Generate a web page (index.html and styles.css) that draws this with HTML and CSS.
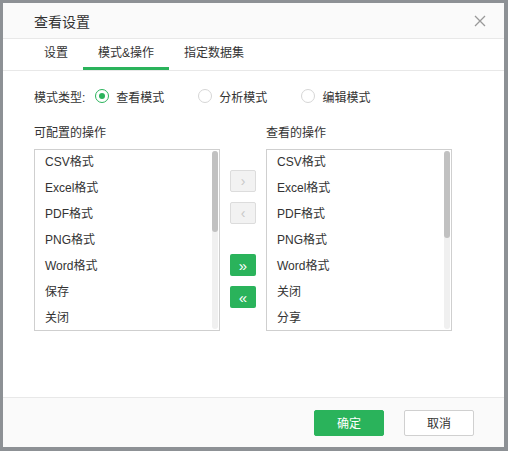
FILE: index.html
```html
<!DOCTYPE html>
<html>
<head>
<meta charset="utf-8">
<link rel="stylesheet" href="styles.css">
</head>
<body>
<div class="dialog">
  <div class="header">
    <div class="title">查看设置</div>
    <svg class="close" width="12" height="12" viewBox="0 0 12 12"><path d="M1 1L11 11M11 1L1 11" stroke="#999" stroke-width="1.3" fill="none"/></svg>
  </div>
  <div class="tabs">
    <div class="tab">设置</div>
    <div class="tab active">模式&amp;操作</div>
    <div class="tab">指定数据集</div>
  </div>
  <div class="content">
    <div class="mode-row">
      <span class="mode-label">模式类型:</span>
      <label class="radio checked"><span class="circle"></span><span>查看模式</span></label>
      <label class="radio"><span class="circle"></span><span>分析模式</span></label>
      <label class="radio"><span class="circle"></span><span>编辑模式</span></label>
    </div>
    <div class="transfer">
      <div class="col">
        <div class="col-title">可配置的操作</div>
        <div class="listbox">
          <div class="items">
            <div class="item">CSV格式</div>
            <div class="item">Excel格式</div>
            <div class="item">PDF格式</div>
            <div class="item">PNG格式</div>
            <div class="item">Word格式</div>
            <div class="item">保存</div>
            <div class="item">关闭</div>
          </div>
          <div class="scrollbar"><div class="thumb thumb-left"></div></div>
        </div>
      </div>
      <div class="mid">
        <div class="mbtn disabled">&#8250;</div>
        <div class="mbtn disabled">&#8249;</div>
        <div class="mbtn green spaced">&#187;</div>
        <div class="mbtn green">&#171;</div>
      </div>
      <div class="col">
        <div class="col-title">查看的操作</div>
        <div class="listbox">
          <div class="items">
            <div class="item">CSV格式</div>
            <div class="item">Excel格式</div>
            <div class="item">PDF格式</div>
            <div class="item">PNG格式</div>
            <div class="item">Word格式</div>
            <div class="item">关闭</div>
            <div class="item">分享</div>
          </div>
          <div class="scrollbar"><div class="thumb thumb-right"></div></div>
        </div>
      </div>
    </div>
  </div>
  <div class="footer">
    <div class="btn primary">确定</div>
    <div class="btn">取消</div>
  </div>
</div>
</body>
</html>
```
FILE: styles.css
```css
html, body {
  margin: 0;
  padding: 0;
  background: #8d9195;
  width: 508px;
  height: 451px;
  overflow: hidden;
  font-family: "Liberation Sans", "Noto Sans CJK SC", sans-serif;
  color: #333;
}
.dialog {
  margin: 3px 4px 4px 3px;
  width: 501px;
  height: 444px;
  background: #fff;
  display: flex;
  flex-direction: column;
}
.header {
  background: #fafafa;
  border-bottom: 1px solid #e8e8e8;
  display: flex;
  align-items: center;
  justify-content: space-between;
  padding: 0 18px 0 31px;
  box-sizing: border-box;
  height: 36px;
}
.title {
  font-size: 14px;
  color: #333;
}
.close {
  display: block;
}
.tabs {
  display: flex;
  height: 32px;
  border-bottom: 1px solid #e8e8e8;
  padding-left: 26px;
  box-sizing: border-box;
}
.tab {
  padding: 0 15px;
  font-size: 12px;
  line-height: 29px;
  color: #333;
  border-bottom: 3px solid transparent;
}
.tab.active {
  border-bottom-color: #2ab35b;
}
.content {
  flex: 1;
  padding: 16px 0 0 31px;
}
.mode-row {
  display: flex;
  align-items: center;
  font-size: 12px;
  height: 18px;
}
.mode-label {
  margin-right: 10px;
}
.radio {
  display: flex;
  align-items: center;
  margin-right: 34px;
}
.circle {
  width: 12px;
  height: 12px;
  border: 1px solid #d6d6d6;
  border-radius: 50%;
  margin-right: 7px;
  position: relative;
  background: #fff;
}
.radio.checked .circle {
  border-color: #2ab35b;
}
.radio.checked .circle::after {
  content: "";
  position: absolute;
  width: 6px;
  height: 6px;
  border-radius: 50%;
  background: #2ab35b;
  left: 3px;
  top: 3px;
}
.transfer {
  display: flex;
  margin-top: 19px;
}
.col-title {
  font-size: 12px;
  line-height: 18px;
  margin-bottom: 7px;
}
.listbox {
  width: 186px;
  height: 182px;
  border: 1px solid #cfcfcf;
  box-sizing: border-box;
  display: flex;
  overflow: hidden;
}
.items {
  flex: 1;
  padding-left: 10px;
}
.item {
  font-size: 12px;
  height: 26px;
  line-height: 25px;
}
.scrollbar {
  width: 6px;
  margin: 1px 1px 1px 0;
  background: #f0f0f0;
  border-radius: 3px;
}
.thumb {
  background: #c1c1c1;
  border-radius: 3px;
}
.thumb-left { height: 81px; }
.thumb-right { height: 87px; }
.mid {
  width: 46px;
  display: flex;
  flex-direction: column;
  align-items: center;
  padding-top: 46px;
}
.mbtn {
  width: 26px;
  height: 22px;
  box-sizing: border-box;
  border-radius: 2px;
  display: flex;
  align-items: center;
  justify-content: center;
  font-size: 14px;
  margin-bottom: 10px;
}
.mbtn.disabled {
  background: #f2f2f2;
  border: 1px solid #dcdcdc;
  color: #c8c8c8;
}
.mbtn.green {
  background: #2ab35b;
  color: #fff;
  font-size: 15px;
}
.mbtn.spaced {
  margin-top: 20px;
}
.footer {
  height: 50px;
  background: #fafafa;
  border-top: 1px solid #e8e8e8;
  box-sizing: border-box;
  display: flex;
  align-items: center;
  justify-content: flex-end;
  gap: 20px;
  padding-right: 30px;
}
.btn {
  width: 70px;
  height: 26px;
  box-sizing: border-box;
  border: 1px solid #d0d0d0;
  border-radius: 2px;
  background: #fff;
  font-size: 12px;
  display: flex;
  align-items: center;
  justify-content: center;
  color: #333;
}
.btn.primary {
  background: #2ab35b;
  border-color: #2ab35b;
  color: #fff;
}
```
